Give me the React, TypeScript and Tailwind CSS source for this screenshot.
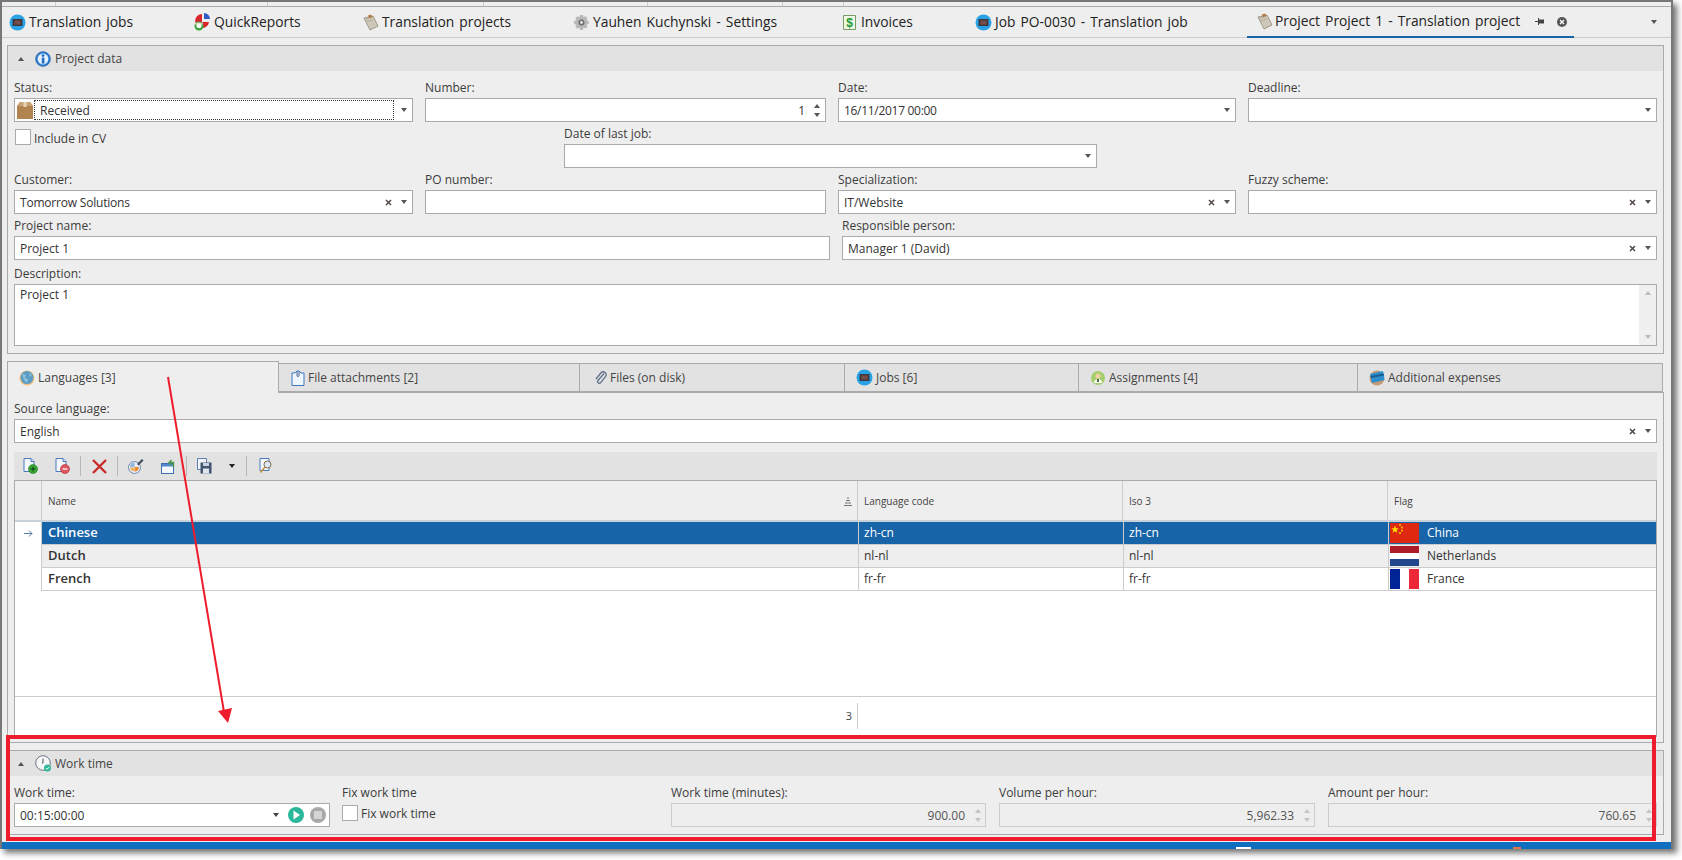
import React from "react";

const Caret = ({ c = "#555" }: { c?: string }) => (
  <svg width="6" height="4" viewBox="0 0 6 4" className="shrink-0"><path d="M0 0h6L3 4z" fill={c} /></svg>
);
const CaretUp = ({ c = "#555" }: { c?: string }) => (
  <svg width="6" height="4" viewBox="0 0 6 4" className="shrink-0"><path d="M0 4h6L3 0z" fill={c} /></svg>
);
const Clear = () => (
  <svg width="7" height="7" viewBox="0 0 7 7" className="shrink-0"><path d="M1 1l5 5M6 1L1 6" stroke="#4a3f3a" strokeWidth="1.4" /></svg>
);

const JobIcon = () => (
  <svg width="17" height="17" viewBox="0 0 17 17" className="shrink-0">
    <circle cx="8.5" cy="8.5" r="8" fill="#29a3e6" />
    <rect x="3.5" y="5" width="10" height="7" fill="#3d3a40" />
    <rect x="5.5" y="6.5" width="6" height="4" fill="#7b4a4a" />
  </svg>
);
const ReportIcon = () => (
  <svg width="17" height="18" viewBox="0 0 17 18" className="shrink-0">
    <path d="M8 1A7 7 0 1 0 15 9H8z" fill="#d9262a" />
    <path d="M10 0a6 6 0 0 1 6 6h-6z" fill="#2f5fc4" />
    <circle cx="5" cy="13" r="4.5" fill="#3ea53a" />
    <circle cx="5" cy="12.5" r="2.6" fill="#fff" />
    <path d="M1 9.5h8v2H1z" fill="#e8e2d0" opacity=".7" />
  </svg>
);
const NoteIcon = () => (
  <svg width="17" height="17" viewBox="0 0 17 17" className="shrink-0">
    <path d="M2 4l9-2 5 10-8 4z" fill="#cfc8b8" stroke="#8d8778" strokeWidth=".8" />
    <path d="M4 5l6-1.3M5 7.5l6-1.5" stroke="#a9a290" strokeWidth=".7" />
    <path d="M6 1.5l3-1 1.5 2.5-3.5 1z" fill="#b5763a" />
  </svg>
);
const GearIcon = () => (
  <svg width="17" height="17" viewBox="0 0 17 17" className="shrink-0">
    <path d="M7 1h3l.5 2.2 2-1 2 2-1 2 2.2.8v3l-2.2.6 1 2-2 2-2-1L10 16H7l-.6-2.2-2 1-2-2 1-2L1 10V7l2.4-.8-1-2 2-2 2 1z" fill="#b8b8b8" />
    <circle cx="8.5" cy="8.5" r="3" fill="#6d6d6d" />
    <circle cx="8.5" cy="8.5" r="1.4" fill="#e8e8e8" />
  </svg>
);
const InvoiceIcon = () => (
  <svg width="13" height="17" viewBox="0 0 13 17" className="shrink-0">
    <path d="M.5 1.5h12v14H.5z" fill="#eef6e4" stroke="#7a9a6a" />
    <text x="6.5" y="13" textAnchor="middle" fontSize="12" fontWeight="700" fill="#1d9a34" fontFamily="Liberation Sans, sans-serif">$</text>
  </svg>
);
const InfoIcon = () => (
  <svg width="16" height="16" viewBox="0 0 16 16" className="shrink-0">
    <circle cx="8" cy="8" r="7.3" fill="#2f7fd6" stroke="#1d5ea8" strokeWidth=".8" />
    <circle cx="8" cy="8" r="5.4" fill="#e6f1fb" />
    <rect x="6.8" y="6.6" width="2.6" height="6" fill="#1f6cc4" />
    <circle cx="8" cy="4.6" r="1.4" fill="#1f6cc4" />
  </svg>
);
const BoxIcon = () => (
  <svg width="16" height="18" viewBox="0 0 16 18" className="shrink-0">
    <path d="M3 1h10l3 4v13H0V5z" fill="#b0834f" />
    <path d="M0 5h16l-3-4H3z" fill="#c9a477" />
    <rect x="6.5" y="1" width="3" height="5" fill="#e6d3b6" />
  </svg>
);
const GlobeIcon = () => (
  <svg width="16" height="16" viewBox="0 0 16 16" className="shrink-0">
    <circle cx="8" cy="8" r="7.5" fill="#f5c27a" />
    <circle cx="8" cy="7.6" r="6.5" fill="#5d9cc4" />
    <path d="M3 4l4 1-1 3 3 1-1 4-3-3zM10 3l3 2-2 2z" fill="#8cc0d8" />
  </svg>
);
const AttachIcon = () => (
  <svg width="14" height="16" viewBox="0 0 14 16" className="shrink-0">
    <path d="M1 3h3l2-2h2l2 2h3v12.500H1z" fill="#eef5fd" stroke="#3d78c0" />
    <path d="M6 1.500v4a1 1 0 0 0 2 0v-4" fill="none" stroke="#3d5e90" />
  </svg>
);
const ClipIcon = () => (
  <svg width="12" height="14" viewBox="0 0 12 14" className="shrink-0">
    <path d="M9 2.500L3 9.500a1.700 1.700 0 0 0 2.500 2.300l5.200-6.500a3 3 0 0 0-4.500-3.800L1 8" fill="none" stroke="#60708a" strokeWidth="1.300" />
  </svg>
);
const PersonIcon = () => (
  <svg width="16" height="16" viewBox="0 0 16 16" className="shrink-0">
    <circle cx="8" cy="8" r="7" fill="#a5cf6c" />
    <circle cx="8" cy="6" r="2.500" fill="#f2d0a4" />
    <path d="M4 13c0-3 2-4 4-4s4 1 4 4z" fill="#fff" />
    <path d="M7 9h2v3H7z" fill="#4f6a3a" />
  </svg>
);
const CardIcon = () => (
  <svg width="16" height="16" viewBox="0 0 16 16" className="shrink-0">
    <circle cx="8" cy="8" r="7.500" fill="#c69a72" />
    <path d="M1 4l13-3 1.500 9L3 13z" fill="#2c8fd0" />
    <path d="M1.500 6l13.300-2.500.4 2L2 8z" fill="#1b5f92" />
  </svg>
);
const DocBase = () => (
  <>
    <path d="M1 .5h7l3 3v10H1z" fill="#f4f8fd" stroke="#4a7ab8" />
    <path d="M8 .5v3h3" fill="#cfe0f4" stroke="#4a7ab8" />
  </>
);
const DocPlus = () => (
  <svg width="15" height="16" viewBox="0 0 15 16" className="shrink-0">
    <DocBase />
    <circle cx="10" cy="11" r="4.500" fill="#39a835" stroke="#1f7a20" strokeWidth=".6" />
    <path d="M7.500 11h5M10 8.500v5" stroke="#0e3f10" strokeWidth="1" />
  </svg>
);
const DocMinus = () => (
  <svg width="15" height="16" viewBox="0 0 15 16" className="shrink-0">
    <DocBase />
    <circle cx="10" cy="11" r="4.500" fill="#e0555f" stroke="#a82a30" strokeWidth=".6" />
    <path d="M7.500 11h5" stroke="#fff" strokeWidth="1.200" />
  </svg>
);
const RedX = () => (
  <svg width="15" height="15" viewBox="0 0 15 15" className="shrink-0">
    <path d="M1 1l13 13M14 1L1 14" stroke="#c92a2a" strokeWidth="2.400" />
  </svg>
);
const PaletteIcon = () => (
  <svg width="16" height="16" viewBox="0 0 16 16" className="shrink-0">
    <circle cx="6.500" cy="9.500" r="6" fill="#e9eef5" stroke="#6d88ab" />
    <path d="M6.500 4.500v4.500H2a4.500 4.500 0 0 1 4.500-4.500z" fill="#8fb5dc" />
    <path d="M6.500 9h4.500a4.500 4.500 0 0 1-4.500 4.500z" fill="#e98a2d" />
    <path d="M6 9.500v4a4.500 4.500 0 0 1-4-4z" fill="#eeb463" />
    <path d="M9 6l5-5 1.500 1.500-5 5z" fill="#3f4b5c" />
  </svg>
);
const WindowIcon = () => (
  <svg width="15" height="15" viewBox="0 0 15 15" className="shrink-0">
    <rect x=".5" y="4.500" width="12" height="10" fill="#f3f7fc" stroke="#3d6fad" />
    <rect x="1" y="5" width="11" height="2.500" fill="#4f8ad0" />
    <path d="M8 3.500h4.500V8M10.500 1L8 3.500 10.500 6" fill="none" stroke="#4a9a45" strokeWidth="1.400" />
  </svg>
);
const SaveIcon = () => (
  <svg width="15" height="16" viewBox="0 0 15 16" className="shrink-0">
    <path d="M.5.500h9v11h-9z" fill="#f2f6fb" stroke="#5d80b0" />
    <rect x="3.500" y="4.500" width="11" height="11" fill="#43566f" />
    <rect x="6" y="5" width="6" height="3" fill="#c7d4e4" />
    <rect x="6" y="10.500" width="6" height="5" fill="#dfe7f1" />
  </svg>
);
const DocSearch = () => (
  <svg width="14" height="16" viewBox="0 0 14 16" className="shrink-0">
    <path d="M1 .5h9v12H1z" fill="#f4f8fd" stroke="#4a7ab8" />
    <circle cx="8.500" cy="6.500" r="3.500" fill="#dceaf8" stroke="#7d6a4a" />
    <path d="M6 9l-4.500 5.500" stroke="#c98a3a" strokeWidth="1.500" />
  </svg>
);
const ClockIcon = () => (
  <svg width="16" height="17" viewBox="0 0 16 17" className="shrink-0">
    <circle cx="8" cy="8" r="7.300" fill="#f4f6f8" stroke="#6b7783" strokeWidth="1" />
    <path d="M8 3.500V8h-1" stroke="#4d5660" fill="none" />
    <circle cx="12.500" cy="13" r="3.500" fill="#35b99a" />
    <path d="M11 13l1.200 1.200 2-2.200" stroke="#fff" fill="none" strokeWidth=".9" />
  </svg>
);

const T = ({ children, className = "" }: { children: React.ReactNode; className?: string }) => (
  <span className={"whitespace-nowrap " + className}>{children}</span>
);

const Label = ({ children }: { children: React.ReactNode }) => (
  <div className="h-[20px] flex items-center text-[12px] text-[#3c3c3c] whitespace-nowrap">{children}</div>
);

const Combo = ({ value, clear, caret = true, vc = "" }: { value?: string; clear?: boolean; caret?: boolean; vc?: string }) => (
  <div className="h-[24px] bg-white border border-[#aaaaaa] flex items-center pl-[5px] text-[12px] text-[#333]">
    <span className={"flex-1 whitespace-nowrap pt-[1px] " + vc}>{value}</span>
    {clear && <span className="mr-[9px]"><Clear /></span>}
    {caret && <span className="mr-[5px]"><Caret /></span>}
  </div>
);

const Spin = ({ c = "#555" }: { c?: string }) => (
  <div className="flex flex-col items-center gap-[5px] w-[10px]">
    <CaretUp c={c} />
    <Caret c={c} />
  </div>
);

const Disabled = ({ value, label, w }: { value: string; label: string; w: string }) => (
  <div className={w}>
    <Label>{label}</Label>
    <div className="h-[24px] bg-[#eeeeee] border border-[#cccccc] flex items-center justify-end text-[12px] text-[#555]">
      <span className="mr-[8px] pt-[1px]">{value}</span>
      <span className="mr-[2px]"><Spin c="#c4c4c4" /></span>
    </div>
  </div>
);

const topTabs = [
  { w: "w-[186px]", icon: <JobIcon />, text: "Translation jobs", cls: "pl-[7px] gap-[3px]" },
  { w: "w-[168px]", icon: <ReportIcon />, text: "QuickReports", cls: "pl-[6px] gap-[3px]" },
  { w: "w-[210px]", icon: <NoteIcon />, text: "Translation projects", cls: "pl-[6px] gap-[3px]" },
  { w: "w-[270px]", icon: <GearIcon />, text: "Yauhen Kuchynski - Settings", cls: "pl-[7px] gap-[3px]" },
  { w: "w-[132px]", icon: <InvoiceIcon />, text: "Invoices", cls: "pl-[7px] gap-[5px]" },
  { w: "w-[279px]", icon: <JobIcon />, text: "Job PO-0030 - Translation job", cls: "pl-[7px] gap-[3px]" },
];

const lowerTabs = [
  { w: "w-[301px]", pl: "pl-[12px]", icon: <AttachIcon />, text: "File attachments [2]" },
  { w: "w-[265px]", pl: "pl-[15px]", icon: <ClipIcon />, text: "Files (on disk)" },
  { w: "w-[234px]", pl: "pl-[11px]", icon: <JobIcon />, text: "Jobs [6]" },
  { w: "w-[279px]", pl: "pl-[11px]", icon: <PersonIcon />, text: "Assignments [4]" },
  { w: "w-[305px]", pl: "pl-[11px]", icon: <CardIcon />, text: "Additional expenses" },
];

const rows = [
  { name: "Chinese", code: "zh-cn", iso: "zh-cn", flag: "China", sel: true, bg: "bg-[#1764a8]", tx: "text-white" },
  { name: "Dutch", code: "nl-nl", iso: "nl-nl", flag: "Netherlands", sel: false, bg: "bg-[#eeeeee]", tx: "text-[#333]" },
  { name: "French", code: "fr-fr", iso: "fr-fr", flag: "France", sel: false, bg: "bg-white", tx: "text-[#333]" },
];

const Flag = ({ name }: { name: string }) => {
  if (name === "China")
    return (
      <svg width="29" height="20" viewBox="0 0 29 20" className="shrink-0">
        <rect width="29" height="20" fill="#de2910" />
        <path d="M5 2.500l1 2.800h2.800L6.600 7l.8 2.800L5 8.200 2.600 9.800 3.400 7 1.200 5.300H4z" fill="#ffde00" />
        <circle cx="10" cy="2" r=".9" fill="#ffde00" />
        <circle cx="12" cy="4.500" r=".9" fill="#ffde00" />
        <circle cx="12" cy="7.500" r=".9" fill="#ffde00" />
        <circle cx="10" cy="10" r=".9" fill="#ffde00" />
      </svg>
    );
  if (name === "Netherlands")
    return (
      <svg width="29" height="20" viewBox="0 0 29 20" className="shrink-0">
        <rect width="29" height="7" fill="#ae1c28" />
        <rect y="7" width="29" height="6" fill="#fff" />
        <rect y="13" width="29" height="7" fill="#21468b" />
      </svg>
    );
  return (
    <svg width="29" height="20" viewBox="0 0 29 20" className="shrink-0">
      <rect width="10" height="20" fill="#002395" />
      <rect x="10" width="9" height="20" fill="#fff" />
      <rect x="19" width="10" height="20" fill="#ed2939" />
    </svg>
  );
};

export default function App() {
  return (
    <div className="relative w-[1682px] h-[860px] bg-white overflow-hidden font-['Open_Sans','Noto_Sans',sans-serif]">
      <div className="w-[1673px] h-[849px] bg-[#eeeeee] border-x-2 border-t-2 border-x-[#777777] border-t-[#777777] shadow-[4px_4px_6px_rgba(0,0,0,0.55)] flex flex-col">
        {/* clipped strip of the tabs above */}
        <div className="h-[5px] shrink-0 flex border-b border-[#aaaaaa]">
          <div className="w-[54px] border-r border-[#cccccc]" />
          <div className="w-[212px] border-r border-[#cccccc]" />
          <div className="w-[216px] border-r border-[#cccccc]" />
          <div className="w-[164px] border-r border-[#cccccc]" />
          <div className="w-[135px] border-r border-[#cccccc]" />
          <div className="w-[61px] border-r border-[#cccccc]" />
        </div>
        {/* document tabs */}
        <div className="h-[31px] shrink-0 flex items-stretch border-b border-[#cccccc] text-[13.8px] text-[#222] [word-spacing:1.5px]">
          {topTabs.map((t) => (
            <div key={t.text} className={"flex items-center shrink-0 " + t.w + " " + t.cls}>
              {t.icon}
              <T>{t.text}</T>
            </div>
          ))}
          <div className="w-[327px] shrink-0 flex items-center pl-[9px] gap-[2px] border-b-2 border-[#1764a8] -mb-px">
            <NoteIcon />
            <T>Project Project 1 - Translation project</T>
            <svg width="9" height="9" viewBox="0 0 9 9" className="ml-[13px] shrink-0">
              <path d="M0 4.500h3" stroke="#444" />
              <path d="M3.500 1v7" stroke="#444" />
              <rect x="4" y="2.500" width="5" height="4" fill="#444" />
            </svg>
            <svg width="10" height="10" viewBox="0 0 10 10" className="ml-[11px] shrink-0">
              <circle cx="5" cy="5" r="5" fill="#555" />
              <path d="M3 3l4 4M7 3l-4 4" stroke="#fff" strokeWidth="1.200" />
            </svg>
          </div>
          <div className="flex-1 flex items-center justify-end pr-[14px]"><Caret /></div>
        </div>

        {/* Project data panel */}
        <div className="mt-[7px] ml-[5px] w-[1657px] h-[309px] shrink-0 border border-[#aaaaaa] flex flex-col">
          <div className="h-[25px] shrink-0 bg-[#e2e2e2] flex items-center pl-[10px]">
            <CaretUp />
            <span className="ml-[11px]"><InfoIcon /></span>
            <T className="ml-[4px] text-[12px] text-[#444]">Project data</T>
          </div>
          <div className="pl-[6px] pt-[7px] flex flex-col gap-[2px]">
            <div className="flex">
              <div className="w-[399px]">
                <Label>Status:</Label>
                <div className="h-[24px] bg-white border border-[#aaaaaa] flex items-center pl-[2px] text-[12px] text-[#333]">
                  <BoxIcon />
                  <div className="ml-[1px] w-[360px] h-[20px] border border-dotted border-[#333] flex items-center pl-[5px] pt-[1px]">Received</div>
                  <span className="ml-[7px]"><Caret /></span>
                </div>
              </div>
              <div className="w-[401px] ml-[12px]">
                <Label>Number:</Label>
                <div className="h-[24px] bg-white border border-[#aaaaaa] flex items-center justify-end text-[12px] text-[#333]">
                  <span className="mr-[7px] pt-[1px]">1</span>
                  <span className="mr-[3px]"><Spin /></span>
                </div>
              </div>
              <div className="w-[398px] ml-[12px]">
                <Label>Date:</Label>
                <Combo value="16/11/2017 00:00" vc="tracking-[-0.3px]" />
              </div>
              <div className="w-[409px] ml-[12px]">
                <Label>Deadline:</Label>
                <Combo />
              </div>
            </div>
            <div className="flex">
              <div className="w-[550px] pt-[5px] flex items-start">
                <div className="w-[16px] h-[16px] bg-white border border-[#aaaaaa] ml-[1px]" />
                <T className="ml-[3px] text-[12px] text-[#3c3c3c] leading-[20px]">Include in CV</T>
              </div>
              <div className="w-[533px]">
                <Label>Date of last job:</Label>
                <Combo />
              </div>
            </div>
            <div className="flex">
              <div className="w-[399px]">
                <Label>Customer:</Label>
                <Combo value="Tomorrow Solutions" clear vc="tracking-[-0.2px]" />
              </div>
              <div className="w-[401px] ml-[12px]">
                <Label>PO number:</Label>
                <Combo caret={false} />
              </div>
              <div className="w-[398px] ml-[12px]">
                <Label>Specialization:</Label>
                <Combo value="IT/Website" clear />
              </div>
              <div className="w-[409px] ml-[12px]">
                <Label>Fuzzy scheme:</Label>
                <Combo clear />
              </div>
            </div>
            <div className="flex">
              <div className="w-[816px]">
                <Label>Project name:</Label>
                <Combo value="Project 1" caret={false} />
              </div>
              <div className="w-[815px] ml-[12px]">
                <Label>Responsible person:</Label>
                <Combo value="Manager 1 (David)" clear />
              </div>
            </div>
            <div className="w-[1643px] mt-[2px]">
              <div className="h-[20px] flex items-center text-[12px] text-[#3c3c3c]">Description:</div>
              <div className="h-[62px] bg-white border border-[#aaaaaa] flex">
                <div className="flex-1 pl-[5px] pt-[1px] text-[12px] text-[#333]">Project 1</div>
                <div className="w-[17px] bg-[#f0f0f0] flex flex-col items-center justify-between py-[6px]">
                  <CaretUp c="#bbbbbb" />
                  <Caret c="#bbbbbb" />
                </div>
              </div>
            </div>
          </div>
        </div>

        {/* lower tabs */}
        <div className="mt-[7px] ml-[5px] h-[32px] shrink-0 flex items-stretch text-[12px] text-[#444] relative z-10">
          <div className="w-[272px] h-[32px] bg-[#eeeeee] border-x border-t border-[#aaaaaa] flex items-center pl-[11px] gap-[3px]">
            <GlobeIcon />
            <T>Languages [3]</T>
          </div>
          {lowerTabs.map((t) => (
            <div key={t.text} className={"mt-[2px] h-[29px] shrink-0 bg-[#e2e2e2] border-r border-y border-[#aaaaaa] flex items-center gap-[3px] " + t.w + " " + t.pl}>
              {t.icon}
              <T>{t.text}</T>
            </div>
          ))}
        </div>

        {/* tab page */}
        <div className="-mt-px ml-[5px] w-[1657px] h-[351px] shrink-0 border border-[#aaaaaa] pl-[6px] pr-[6px] pt-[6px]">
          <Label>Source language:</Label>
          <div className="h-[24px]"><Combo value="English" clear /></div>
          <div className="mt-[9px] h-[28px] bg-[#e2e2e2] flex items-center pl-[9px] w-[1643px]">
            <DocPlus />
            <span className="ml-[17px]"><DocMinus /></span>
            <span className="ml-[10px] w-px h-[20px] bg-[#b8b8b8]" />
            <span className="ml-[11px]"><RedX /></span>
            <span className="ml-[10px] w-px h-[20px] bg-[#b8b8b8]" />
            <span className="ml-[10px]"><PaletteIcon /></span>
            <span className="ml-[17px]"><WindowIcon /></span>
            <span className="ml-[10px] w-px h-[20px] bg-[#b8b8b8]" />
            <span className="ml-[10px]"><SaveIcon /></span>
            <span className="ml-[17px]"><Caret c="#222" /></span>
            <span className="ml-[11px] w-px h-[20px] bg-[#b8b8b8]" />
            <span className="ml-[12px]"><DocSearch /></span>
          </div>
          {/* grid */}
          <div className="w-[1643px] h-[257px] bg-white border-x border-t border-[#aaaaaa] flex flex-col">
            <div className="h-[41px] shrink-0 bg-[#eeeeee] border-b-2 border-[#c8d0d8] flex text-[10px] text-[#444]">
              <div className="w-[27px] border-r border-[#cccccc]" />
              <div className="w-[816px] border-r border-[#cccccc] flex items-center pl-[6px] pr-[4px] pt-[1px] justify-between">
                <span>Name</span>
                <svg width="9" height="9" viewBox="0 0 9 9"><path d="M3 1h2M2 3.500h4M1 6h6M0 8.500h8" stroke="#777" /></svg>
              </div>
              <div className="w-[265px] border-r border-[#cccccc] flex items-center pl-[6px] pt-[1px]">Language code</div>
              <div className="w-[265px] border-r border-[#cccccc] flex items-center pl-[6px] pt-[1px]">Iso 3</div>
              <div className="flex-1 flex items-center pl-[6px] pt-[1px]">Flag</div>
            </div>
            {rows.map((r) => (
              <div key={r.name} className="h-[23px] shrink-0 flex">
                <div className="w-[26px] flex items-center justify-center">
                  {r.sel && (
                    <svg width="9" height="9" viewBox="0 0 9 9"><path d="M0 4.500h8M5 1.500l3 3-3 3" fill="none" stroke="#5b7ba8" /></svg>
                  )}
                </div>
                <div className={"flex-1 flex border-l border-b border-[#cccccc] text-[12px] " + r.bg + " " + r.tx}>
                  <div className="w-[816px] pl-[6px] flex items-center font-semibold text-[13px]">{r.name}</div>
                  <div className="w-[265px] border-l border-[#cccccc] pl-[5px] flex items-center">{r.code}</div>
                  <div className="w-[265px] border-l border-[#cccccc] pl-[5px] flex items-center">{r.iso}</div>
                  <div className="flex-1 border-l border-[#cccccc] pl-[1px] flex items-center gap-[8px]">
                    <Flag name={r.flag} />
                    <span>{r.flag}</span>
                  </div>
                </div>
              </div>
            ))}
            <div className="flex-1" />
            <div className="h-[41px] shrink-0 border-t border-[#cccccc] flex items-start pt-[6px]">
              <div className="w-[843px] h-[26px] border-r border-[#cccccc] flex items-center justify-end pr-[5px] text-[11px] text-[#444]">3</div>
            </div>
          </div>
        </div>

        {/* Work time panel */}
        <div className="mt-[7px] ml-[5px] w-[1657px] h-[85px] shrink-0 border border-[#aaaaaa] flex flex-col">
          <div className="h-[25px] shrink-0 bg-[#e2e2e2] flex items-center pl-[10px]">
            <CaretUp />
            <span className="ml-[11px]"><ClockIcon /></span>
            <T className="ml-[4px] text-[12px] text-[#444]">Work time</T>
          </div>
          <div className="pl-[6px] pt-[7px] flex">
            <div className="w-[316px]">
              <Label>Work time:</Label>
              <div className="h-[24px] bg-white border border-[#aaaaaa] flex items-center pl-[5px] text-[12px] text-[#333]">
                <span className="flex-1 pt-[1px]">00:15:00:00</span>
                <Caret c="#444" />
                <svg width="16" height="16" viewBox="0 0 16 16" className="ml-[9px] shrink-0">
                  <circle cx="8" cy="8" r="8" fill="#2bb89a" />
                  <path d="M5.500 3.500L12 8l-6.500 4.500z" fill="#fff" />
                </svg>
                <svg width="16" height="16" viewBox="0 0 16 16" className="ml-[6px] mr-[3px] shrink-0">
                  <circle cx="8" cy="8" r="8" fill="#a8a8a8" />
                  <rect x="4" y="4" width="8" height="8" fill="#d4d4d4" />
                </svg>
              </div>
            </div>
            <div className="w-[329px] ml-[12px]">
              <Label>Fix work time</Label>
              <div className="flex items-start pt-[2px]">
                <div className="w-[16px] h-[16px] bg-white border border-[#aaaaaa]" />
                <T className="ml-[3px] text-[12px] text-[#3c3c3c] leading-[18px]">Fix work time</T>
              </div>
            </div>
            <Disabled label="Work time (minutes):" value="900.00" w="w-[315px]" />
            <div className="w-[13px]" />
            <Disabled label="Volume per hour:" value="5,962.33" w="w-[316px]" />
            <div className="w-[13px]" />
            <Disabled label="Amount per hour:" value="760.65" w="w-[329px]" />
          </div>
        </div>

        {/* status bar */}
        <div className="mt-auto h-[7px] shrink-0 bg-[#106ebe] flex items-end relative">
          <span className="ml-[1234px] w-[15px] h-[2px] bg-white" />
          <span className="ml-[262px] w-[8px] h-[2px] bg-[#e8734a]" />
        </div>
      </div>

      {/* annotations drawn over the shot */}
      <div className="absolute z-20 left-[6px] top-[735px] w-[1650px] h-[106px] border-4 border-[#ee1c2c] pointer-events-none" />
      <svg className="absolute z-20 left-0 top-0 pointer-events-none" width="1682" height="860">
        <path d="M168 377L224 712" stroke="#ee1c2c" strokeWidth="2" fill="none" />
        <path d="M218 711L232 708L228 723z" fill="#ee1c2c" />
      </svg>
    </div>
  );
}
